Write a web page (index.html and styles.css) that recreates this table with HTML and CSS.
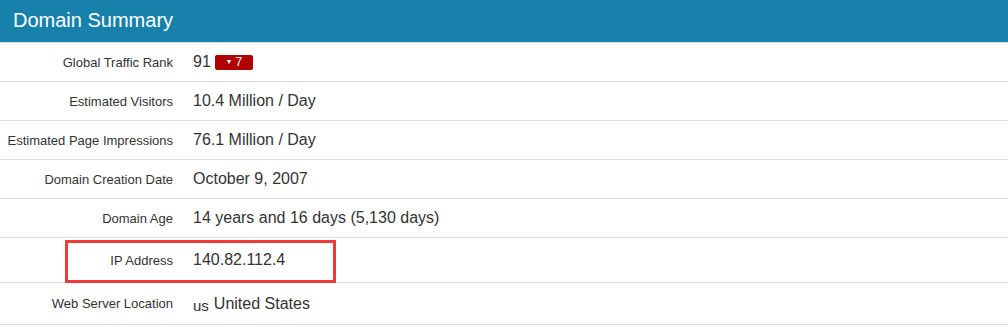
FILE: index.html
```html
<!DOCTYPE html>
<html lang="en">
<head>
<meta charset="utf-8">
<title>Domain Summary</title>
<link rel="stylesheet" href="styles.css">
</head>
<body>
<section class="panel">
  <h2 class="panel-title">Domain Summary</h2>
  <div class="rows">
    <div class="row">
      <div class="label">Global Traffic Rank</div>
      <div class="value">91 <span class="badge"><span class="tri">&#9660;</span>7</span></div>
    </div>
    <div class="row">
      <div class="label">Estimated Visitors</div>
      <div class="value">10.4 Million / Day</div>
    </div>
    <div class="row">
      <div class="label">Estimated Page Impressions</div>
      <div class="value">76.1 Million / Day</div>
    </div>
    <div class="row">
      <div class="label">Domain Creation Date</div>
      <div class="value">October 9, 2007</div>
    </div>
    <div class="row">
      <div class="label">Domain Age</div>
      <div class="value">14 years and 16 days (5,130 days)</div>
    </div>
    <div class="row row-ip">
      <div class="label">IP Address</div>
      <div class="value">140.82.112.4</div>
      <div class="highlight"></div>
    </div>
    <div class="row row-last">
      <div class="label">Web Server Location</div>
      <div class="value"><span class="flag">us</span> United States</div>
    </div>
  </div>
</section>
</body>
</html>
```
FILE: styles.css
```css
* { box-sizing: border-box; }
html, body {
  margin: 0;
  padding: 0;
  background: #fff;
  font-family: "Liberation Sans", Arial, sans-serif;
  color: #333;
}
.panel { width: 1008px; }
.panel-title {
  margin: 0;
  height: 42px;
  padding: 0 13px;
  background: #1781ab;
  color: #fff;
  font-weight: normal;
  font-size: 20px;
  line-height: 40px;
}
.rows { border-bottom: 1px solid #ddd; }
.row {
  display: grid;
  grid-template-columns: 181px 1fr;
  align-items: center;
  height: 39px;
  border-top: 1px solid #ddd;
}
.row-ip { height: 45px; position: relative; }
.row-last { height: 42px; }
.label {
  text-align: right;
  padding-right: 8px;
  font-size: 13px;
  color: #333;
}
.value {
  padding-left: 12px;
  font-size: 16px;
  color: #333;
  display: flex;
  align-items: center;
}
.badge {
  display: inline-flex;
  align-items: center;
  justify-content: center;
  margin-left: 4px;
  width: 38px;
  height: 15px;
  background: #b00000;
  color: #fff;
  border-radius: 2px;
  font-size: 12px;
  line-height: 15px;
}
.tri { font-size: 7px; margin-right: 3px; position: relative; top: -1px; }
.flag { font-size: 15px; margin-right: 5px; margin-top: 3px; }
.highlight {
  position: absolute;
  left: 65px;
  top: 2px;
  width: 271px;
  height: 43px;
  border: 3px solid #f03a3a;
}
```
